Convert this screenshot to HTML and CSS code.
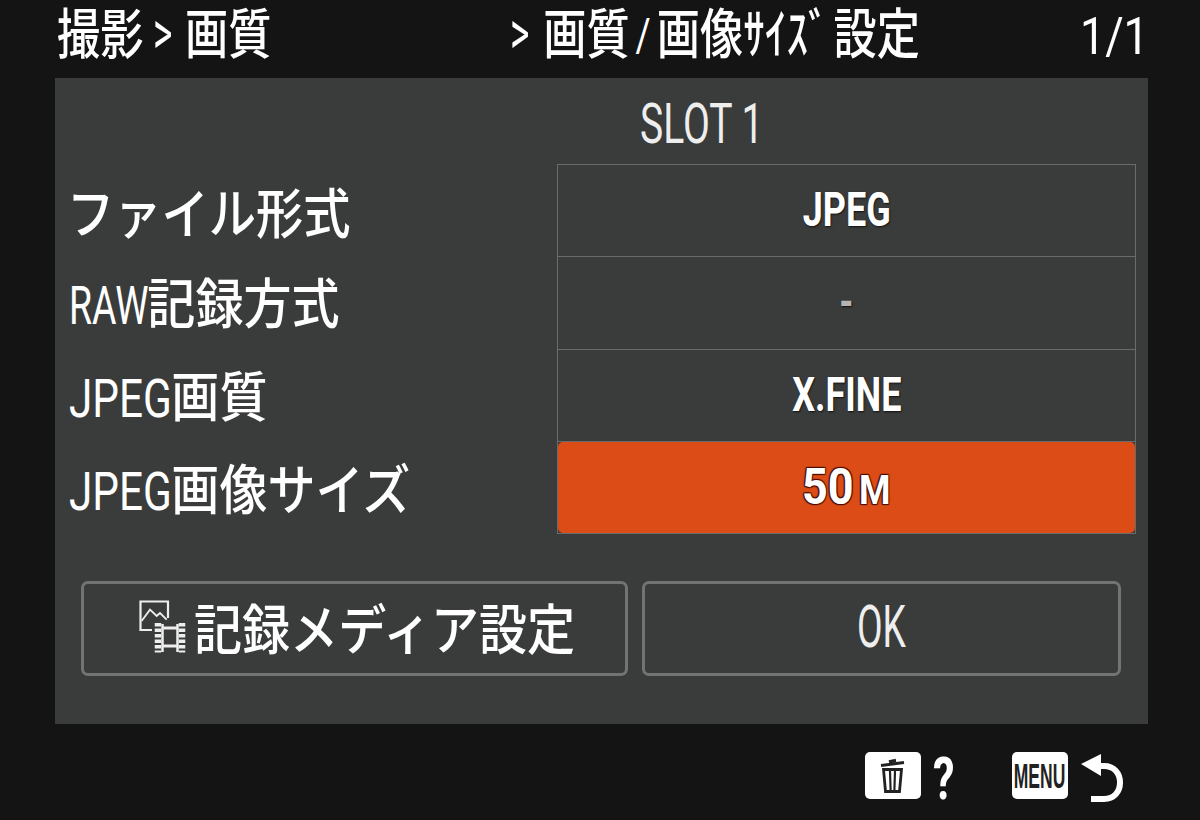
FILE: index.html
```html
<!DOCTYPE html>
<html lang="ja">
<head>
<meta charset="utf-8">
<title>画質/画像サイズ設定</title>
<link rel="stylesheet" href="styles.css">
</head>
<body>
<div class="screen">
  <header class="top">
    <div class="crumb"><span class="sq sq-head">撮影<span class="chev chev-crumb">&gt;</span>画質</span></div>
    <div class="title"><span class="sq sq-head"><span class="chev chev-title">&gt;</span>画質<span class="slash">/</span>画像<span class="hw">ｻｲｽﾞ</span>設定</span></div>
    <div class="page"><span class="sq sq-page">1/1</span></div>
  </header>
  <main class="panel">
    <div class="slot"><span class="sq sq-slot">SLOT 1</span></div>
    <div class="form">
      <div class="labels">
        <div class="label label-first"><span class="sq sq-label sq-kana">ファイル形式</span></div>
        <div class="label"><span class="sq sq-label"><span class="lat lat-raw"><span class="lat-in lat-in-raw">RAW</span></span>記録方式</span></div>
        <div class="label"><span class="sq sq-label"><span class="lat lat-jpeg"><span class="lat-in lat-in-jpeg">JPEG</span></span>画質</span></div>
        <div class="label"><span class="sq sq-label"><span class="lat lat-jpeg"><span class="lat-in lat-in-jpeg">JPEG</span></span>画像サイズ</span></div>
      </div>
      <div class="values">
        <div class="value"><span class="sq sq-val">JPEG</span></div>
        <div class="value dim"><span class="sq sq-val">-</span></div>
        <div class="value"><span class="sq sq-val">X.FINE</span></div>
        <div class="value selected"><span class="sq sq-sel">50<small class="unit">M</small></span></div>
      </div>
    </div>
    <div class="actions">
      <div class="btn btn-media">
        <svg class="media-icon" width="49" height="54" viewBox="0 0 49 54" fill="none" stroke="#eee">
          <path d="M13 30H1.500V1.500H29V18" stroke-width="2.200"/>
          <path d="M2.600 21L11 9.700l6.700 6.300 3.300-3 6.700 6.700" stroke-width="1.800"/>
          <path d="M23.500 24v28M38.500 24v28" stroke-width="2.500"/>
          <path d="M23 28h16M23 46h16" stroke-width="3"/>
          <path d="M19 23v29.500M43 23v29.500" stroke-width="6.500" stroke-dasharray="3.600 1.900"/>
        </svg>
        <span class="sq sq-media">記録メディア設定</span>
      </div>
      <div class="btn btn-ok"><span class="sq sq-ok">OK</span></div>
    </div>
  </main>
  <footer class="bottom">
    <div class="hint hint-del">
      <div class="badge badge-del">
        <svg width="26" height="38" viewBox="0 0 26 38" fill="none" stroke="#222">
          <path d="M1 8.500l23-3" stroke-width="2.800"/>
          <path d="M9 5l7-1.500" stroke-width="3.400"/>
          <path d="M3.500 12.500h18l-2 22h-14z" stroke-width="2.800"/>
          <path d="M10 14l.6 19M15 14l-.6 19" stroke-width="2.200"/>
        </svg>
      </div>
      <span class="sq sq-q">?</span>
    </div>
    <div class="hint hint-menu">
      <div class="badge badge-menu"><span class="sq sq-menu">MENU</span></div>
      <svg class="back-icon" width="44" height="52" viewBox="0 0 44 52" fill="none">
        <path d="M1 12L21 2v22z" fill="#fff"/>
        <path d="M18 14h6c10 0 16 7 16 16.500S34 47 24 47H11" stroke="#fff" stroke-width="6"/>
      </svg>
    </div>
  </footer>
</div>
</body>
</html>
```
FILE: styles.css
```css
* { box-sizing: border-box; }
html, body { margin: 0; padding: 0; }
body {
  width: 1200px;
  height: 820px;
  overflow: hidden;
  background: #141414;
  color: #fff;
  font-family: "Noto Sans CJK JP", "Noto Sans", sans-serif;
}
.screen { width: 1200px; height: 820px; display: flex; flex-direction: column; }
.sq { display: inline-block; white-space: pre; line-height: 1; }

.top {
  height: 78px;
  display: flex;
  align-items: center;
  padding: 0 0 18px 57px;
  font-size: 54px;
  font-weight: 500;
}
.crumb { width: 453px; flex: none; }
.title { width: 570px; flex: none; }
.sq-head { transform: scaleX(.8); transform-origin: left center; }
.chev {
  display: inline-block;
  font-family: Roboto, sans-serif;
  font-weight: 400;
  font-size: 62px;
  line-height: 0;
  transform: scaleX(.75);
  transform-origin: left center;
}
.chev-crumb { width: 40px; margin-left: 12px; }
.chev-title { width: 41.500px; }
.slash {
  display: inline-block;
  width: 34px;
  text-align: center;
  font-family: Roboto, sans-serif;
  font-weight: 400;
  font-size: 46px;
  vertical-align: 3px;
}
.hw { margin-right: 5px; }
.sq-page {
  font-family: Roboto, sans-serif;
  font-weight: 400;
  font-size: 52px;
  transform: scaleX(.86);
  transform-origin: left center;
}

.panel {
  height: 646px;
  margin: 0 52px 0 55px;
  background: #3a3c3b;
  display: flex;
  flex-direction: column;
  flex: none;
}
.slot {
  height: 86px;
  padding: 6px 0 0 585px;
  display: flex;
  align-items: center;
  font-size: 55px;
  font-family: Roboto, sans-serif;
  color: #eee;
}
.sq-slot { transform: scaleX(.71); transform-origin: left center; }

.form { display: flex; height: 370px; padding: 0 12px 0 14px; }
.labels { width: 488px; display: flex; flex-direction: column; flex: none; }
.label { flex: 1; display: flex; align-items: center; font-size: 54px; font-weight: 500; padding-top: 4px; }
.label-first { padding-top: 2px; }
.sq-label { transform: scaleX(.89); transform-origin: left center; }
.sq-kana { margin-left: -2px; transform: scaleX(.875); }
.lat { display: inline-block; font-family: Roboto, sans-serif; font-weight: 400; }
.lat-raw { width: 88px; }
.lat-jpeg { width: 115px; }
.lat-in { display: inline-block; transform-origin: left center; }
.lat-in-raw { transform: scaleX(.78); }
.lat-in-jpeg { transform: scaleX(.88); }
.values {
  width: 579px;
  display: flex;
  flex-direction: column;
  border: 1px solid #6a6c6b;
  flex: none;
}
.value {
  flex: 1;
  display: flex;
  align-items: center;
  justify-content: center;
  border-bottom: 1px solid #6a6c6b;
  font-family: Roboto, sans-serif;
  font-weight: 700;
  font-size: 48px;
  padding-bottom: 1px;
}
.value:last-child { border-bottom: 0; }
.sq-val { transform: scaleX(.75); text-shadow: 1px 1px 2px #111; }
.dim { color: #b4b4b4; }
.selected { background: #dc4c17; border-radius: 5px; }
.sq-sel { font-size: 50px; transform: scaleX(.9); text-shadow: 1px 1px 1px #4a0d00, -1px -1px 1px #4a0d00, 1px -1px 1px #4a0d00, -1px 1px 1px #4a0d00; }
.unit { font-size: 40px; margin-left: 6px; }

.actions { display: flex; gap: 14px; padding: 47px 27px 0 26px; }
.btn {
  height: 95px;
  border: 3px solid #727473;
  border-radius: 7px;
  display: flex;
  align-items: center;
  justify-content: center;
  flex: none;
}
.btn-media { width: 547px; gap: 6px; font-size: 54px; font-weight: 500; padding: 0 0 3px 4px; }
.btn-ok { width: 479px; font-size: 60px; font-family: Roboto, sans-serif; color: #eee; padding-bottom: 3px; }
.sq-media { width: 380px; transform: scaleX(.89); transform-origin: left center; }
.sq-ok { transform: scaleX(.62); }
.media-icon { flex: none; }

.bottom {
  flex: 1;
  display: flex;
  justify-content: flex-end;
  padding: 28px 76px 0 0;
  gap: 59px;
}
.hint { display: flex; align-items: flex-start; gap: 12px; }
.badge {
  height: 47px;
  width: 56px;
  background: #fff;
  border-radius: 5px;
  display: flex;
  align-items: center;
  justify-content: center;
  color: #222;
}
.sq-q {
  font-family: Roboto, sans-serif;
  font-weight: 700;
  font-size: 60px;
  transform: scaleX(.72);
  transform-origin: left top;
  width: 20px;
  margin-top: -3px;
}
.sq-menu {
  font-family: "Liberation Sans", sans-serif;
  font-weight: 700;
  font-size: 35px;
  transform: scaleX(.5);
}
```
